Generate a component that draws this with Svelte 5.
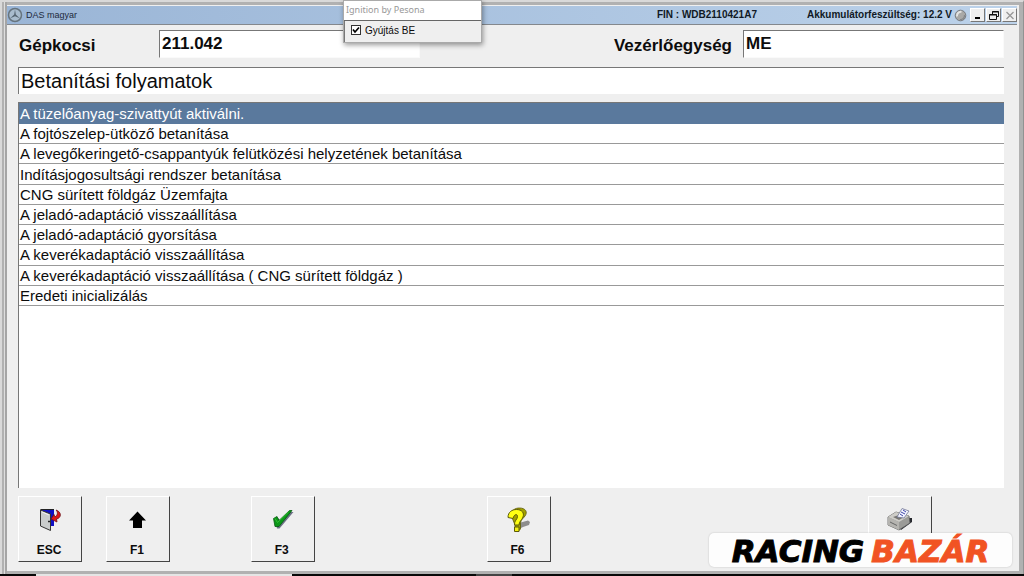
<script>
  const procedures = [
    'A tüzelőanyag-szivattyút aktiválni.',
    'A fojtószelep-ütköző betanítása',
    'A levegőkeringető-csappantyúk felütközési helyzetének betanítása',
    'Indításjogosultsági rendszer betanítása',
    'CNG sürített földgáz Üzemfajta',
    'A jeladó-adaptáció visszaállítása',
    'A jeladó-adaptáció gyorsítása',
    'A keverékadaptáció visszaállítása',
    'A keverékadaptáció visszaállítása ( CNG sürített földgáz )',
    'Eredeti inicializálás'
  ];
  let selected = $state(0);
  let ignition = $state(true);
</script>

<div class="desktop">
  <main class="window">
    <header class="titlebar">
      <svg class="star" viewBox="0 0 16 16" aria-hidden="true">
        <circle cx="8" cy="8" r="6.5" fill="#a9bccd" stroke="#66747f" stroke-width="1.5" />
        <path d="M8 2.5 L8.8 7.6 L12.8 11.2 L8 9.2 L3.2 11.2 L7.2 7.6Z" fill="#566571" />
      </svg>
      <span class="app-name">DAS magyar</span>
      <span class="fin">FIN : WDB2110421A7</span>
      <span class="battery">Akkumulátorfeszültség: 12.2 V</span>
      <svg class="orb" viewBox="0 0 13 13" aria-hidden="true">
        <circle cx="6.5" cy="6.5" r="5.3" fill="#a9a9a7" stroke="#777b80" />
        <path d="M3 7.5A4 4 0 0 1 7.500 2.800" fill="none" stroke="#e4e4e2" stroke-width="2" />
        <path d="M6 10.500A4 4 0 0 0 10.500 6" fill="none" stroke="#84868a" stroke-width="1.200" />
      </svg>
      <div class="controls">
        <button aria-label="Minimize">
          <svg viewBox="0 0 12 11"><path d="M3 8H8" stroke="#000" stroke-width="2" /></svg>
        </button>
        <button aria-label="Restore">
          <svg viewBox="0 0 12 11" fill="none" stroke="#111">
            <path d="M4.500 4V1.500H10.500V6.500H8.500M4 2H11" />
            <path d="M1.500 4.500H8.500V9.500H1.500ZM1 5H9" />
          </svg>
        </button>
        <button aria-label="Close">
          <svg viewBox="0 0 12 11"><path d="M2.500 2L9.500 9M9.500 2L2.500 9" stroke="#979797" stroke-width="1.300" /></svg>
        </button>
      </div>
    </header>

    <div class="body">
      <div class="info">
        <label for="vehicle">Gépkocsi</label>
        <input id="vehicle" value="211.042" readonly />
        <label class="unit-label" for="unit">Vezérlőegység</label>
        <input id="unit" value="ME" readonly />
      </div>

      <h1>Betanítási folyamatok</h1>

      <section class="panel">
        <ul>
          {#each procedures as name, i}
            <li class:current={selected === i}>
              <button onclick={() => (selected = i)}>{name}</button>
            </li>
          {/each}
        </ul>
      </section>

      <footer class="keys">
        <button>
          <svg viewBox="0 0 24 24" aria-hidden="true">
            <path d="M4 2H17V18H8Z" fill="#1010c4" />
            <path d="M3.500 1.500H17" stroke="#222" />
            <path d="M3.500 2L13.500 6V22.500L3.500 18Z" fill="#c9cccc" stroke="#333" />
            <path d="M5 4L12 7" stroke="#f3f3f3" />
            <path d="M11 13.500H13" stroke="#222" stroke-width="1.500" />
            <path d="M19 2C25 4 24.500 10 19.500 11L20 14L14 11L17 6.500L18 9C21 7 21 4 19 2Z" fill="#e01818" stroke="#6d1018" stroke-width=".8" />
          </svg>
          <span>ESC</span>
        </button>
        <button>
          <svg viewBox="0 0 24 24" aria-hidden="true">
            <path d="M12.500 3.500L21 12.500H17V20H8V12.500H4Z" fill="#000" />
          </svg>
          <span>F1</span>
        </button>
        <button>
          <svg viewBox="0 0 24 24" aria-hidden="true">
            <path d="M5 13L8 10L11 13L20 4H23.500L9.500 20.500H7Z" fill="#6c7085" />
            <path d="M3.500 10.500L7 8.500L9 12.500L19.500 2.500H22L9 18.500L5 18.500Z" fill="#0a9818" stroke="#075c10" stroke-width=".8" />
            <path d="M5 10.500L7.500 14.500L18.500 4" fill="none" stroke="#36bd35" />
          </svg>
          <span>F3</span>
        </button>
        <button>
          <svg viewBox="0 0 24 24" aria-hidden="true">
            <path d="M13 15L22 12.500L24 14L23 17L17 19L13 21Z" fill="#8d8d8d" />
            <path d="M5 7C6 2 9 0 13.500 0C19.500 0 22 4 19 8C17 11 15 11 14.500 15V21L12 23.500L9 22L9 17Z" fill="#a2a000" stroke="#5c5a08" stroke-width=".8" />
            <path d="M2 9.500C2 4 6 1.500 10.500 1.500C16 1.500 18.500 5 17 9C16 12.500 13 13 13 17H8.500C8 12.500 11.500 11.500 11.500 8.500C11.500 5.500 8 6 7 10.500Z" fill="#ffff13" stroke="#5c5a08" />
            <path d="M8.500 19H13V23.500H8.500Z" fill="#f4f112" stroke="#5c5a08" />
          </svg>
          <span>F6</span>
        </button>
        <button aria-label="Print">
          <svg viewBox="0 0 24 24" aria-hidden="true">
            <path d="M14 22L25 14V10L22 10L12 19Z" fill="#25272d" />
            <path d="M1 9L9 4L22 8L23 15L12 22L1 17Z" fill="#9b9b98" stroke="#5c5c5c" stroke-width=".8" />
            <path d="M1 9L9 4L22 8L12 14Z" fill="#cecdc8" />
            <path d="M12 14V22L1 17V9Z" fill="#b5b4b0" />
            <path d="M6 9L12 7L17 9L12 12Z" fill="#777672" />
            <path d="M10 9L15 .5L22 3L17 10Z" fill="#f2f3ff" stroke="#747897" stroke-width=".8" />
            <path d="M14 4L18 6M13 6L16 8M16 2L19 4" stroke="#3d46a8" />
            <path d="M3 14L10 17.500" stroke="#666" />
          </svg>
        </button>
      </footer>
    </div>
  </main>
  <div class="taskbar"><i class="open"></i><i class="active"></i></div>

  <aside class="popup">
    <div class="popup-title">Ignition by Pesona</div>
    <label><input type="checkbox" bind:checked={ignition} /><span>Gyújtás BE</span></label>
  </aside>

  <div class="brand"><span>RACING</span><span class="accent">BAZÁR</span></div>
</div>

<style>
  :global(body) {
    margin: 0;
    font-family: 'Liberation Sans', Arial, sans-serif;
    color: #0c0c0c;
  }
  .desktop {
    position: relative;
    display: flex;
    flex-direction: column;
    min-height: 100vh;
    overflow: hidden;
  }
  button, input {
    font: inherit;
    color: inherit;
    box-sizing: border-box;
    margin: 0;
    border-radius: 0;
  }
  .window {
    flex: 1;
    display: flex;
    flex-direction: column;
    background: #efefef;
    border: 2px solid #d9d9d9;
    border-bottom: 0;
    border-right: 1px solid #929292;
    box-shadow: inset 2px 0 #b1b1b1, inset 3px 0 #dedede, inset 5px 0 #a5a5a5,
      inset -4px 0 #b1b1b1, inset 0 3px #b1b1b1, inset 0 -3px #b1b1b1;
    padding: 4px 6px 3px 5px;
  }
  .titlebar {
    display: flex;
    align-items: center;
    height: 18px;
    border-bottom: 1px solid #84888d;
    background: linear-gradient(90deg, #9ab5d6, #bcd2ea);
    font-size: 10px;
    line-height: 18px;
    white-space: nowrap;
  }
  .star {
    width: 16px;
    height: 16px;
    margin-right: 3px;
  }
  .app-name {
    flex: 1;
    font-size: 9px;
    color: #1d2a3c;
  }
  .fin, .battery {
    font-weight: 700;
    color: #101925;
  }
  .battery {
    margin-left: 50px;
  }
  .orb {
    width: 13px;
    height: 13px;
    margin: 0 3px 0 2px;
  }
  .controls {
    display: flex;
    gap: 1px;
  }
  .controls button {
    width: 15px;
    height: 14px;
    padding: 0;
    display: grid;
    place-items: center;
    background: #efefef;
    border: 1px solid #fff;
    border-right-color: #777;
    border-bottom-color: #777;
  }
  .controls svg {
    width: 12px;
    height: 11px;
  }
  .body {
    flex: 1;
    display: flex;
    flex-direction: column;
    padding: 5px 13px 9px 11px;
  }
  .info {
    display: grid;
    grid-template-columns: 141px minmax(0, 261fr) minmax(0, 323fr) minmax(0, 261fr);
    font-size: 17px;
    font-weight: 700;
  }
  .info label {
    line-height: 31px;
    height: 28px;
    padding-left: 1px;
  }
  .info .unit-label {
    text-align: right;
    padding-right: 11px;
  }
  .info input {
    width: 100%;
    height: 28px;
    padding: 0 0 1px 2px;
    background: #fff;
    border: 1px solid #fafafa;
    border-top: 1px solid #777;
    border-left: 1px solid #777;
    outline: none;
  }
  h1 {
    margin: 9px 0 8px;
    height: 26px;
    border-top: 1px solid #777;
    border-left: 1px solid #777;
    background: #fff;
    padding-left: 2px;
    font-size: 20px;
    font-weight: 400;
    line-height: 26px;
  }
  .panel {
    flex: 1;
    background: #fff;
    border-left: 1px solid #777;
    border-top: 1px solid #777;
  }
  ul {
    display: flex;
    flex-direction: column;
    height: 203px;
    margin: 0;
    padding: 0;
    list-style: none;
  }
  li {
    flex: 1;
    display: flex;
    border-bottom: 1px solid #999;
  }
  li:first-child {
    flex: 0 0 20px;
  }
  li button {
    flex: 1;
    border: 0;
    padding: 1px 0 0 1px;
    background: none;
    text-align: left;
    font-size: 15px;
    line-height: 18px;
  }
  li.current {
    background: #5a799d;
    border-color: #5a799d;
    color: #fff;
  }
  .keys {
    display: grid;
    grid-template-columns: 88fr 145fr 236fr 382fr 136fr;
    margin-top: 8px;
  }
  .keys button {
    width: 64px;
    height: 66px;
    padding: 11px 2px 0 0;
    display: flex;
    flex-direction: column;
    align-items: center;
    gap: 11px;
    background: #efefef;
    border: 1px solid #fff;
    border-right: 1px solid #444;
    border-bottom: 1px solid #444;
    font-size: 12px;
    font-weight: 700;
    line-height: 14px;
  }
  .keys svg {
    width: 24px;
    height: 24px;
    overflow: visible;
  }
  .taskbar {
    display: flex;
    height: 2px;
    background: #080808;
  }
  .taskbar i {
    width: 25%;
    margin-left: 36px;
    background: #e5e5e5;
  }
  .taskbar .active {
    width: 36px;
    margin-left: 18%;
    background: #444;
  }
  .popup {
    position: absolute;
    top: 0;
    left: 33.5%;
    width: 139px;
    box-sizing: border-box;
    background: #efefef;
    border: 1px solid #aaa;
    box-shadow: 1px 2px 5px #0006;
    font-size: 10px;
  }
  .popup-title {
    height: 19px;
    padding-left: 2px;
    background: #fff;
    border-bottom: 1px solid #666;
    color: #999;
    font: 9px/18px 'Noto Sans', 'Open Sans', sans-serif;
  }
  .popup label {
    display: flex;
    align-items: center;
    gap: 4px;
    height: 18px;
    padding: 0 0 3px 6px;
    border-left: 1px solid #777;
  }
  .popup input {
    appearance: none;
    width: 10px;
    height: 10px;
    border: 1px solid #333;
    background: #fff;
  }
  .popup input:checked {
    background: #fff url("data:image/svg+xml,%3Csvg xmlns='http://www.w3.org/2000/svg' viewBox='0 0 8 8'%3E%3Cpath d='M1 3.500L3 6L7 1.500' fill='none' stroke='black' stroke-width='1.700'/%3E%3C/svg%3E");
  }
  .brand {
    position: absolute;
    right: 12px;
    bottom: 9px;
    width: 303px;
    height: 34px;
    box-sizing: border-box;
    display: flex;
    justify-content: center;
    gap: 7px;
    border-radius: 5px;
    background: #fdfdfd;
    box-shadow: 0 0 2px #0003;
    font: italic 900 31px/37px 'DejaVu Sans', sans-serif;
    color: #000;
    -webkit-text-stroke: 1px currentColor;
  }
  .accent {
    color: #f15323;
  }
</style>
